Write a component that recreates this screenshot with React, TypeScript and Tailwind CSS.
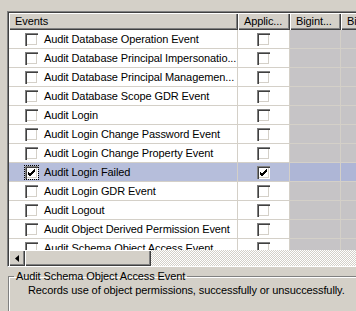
import React from 'react';

const rows = [
  'Audit Database Operation Event',
  'Audit Database Principal Impersonatio...',
  'Audit Database Principal Managemen...',
  'Audit Database Scope GDR Event',
  'Audit Login',
  'Audit Login Change Password Event',
  'Audit Login Change Property Event',
  'Audit Login Failed',
  'Audit Login GDR Event',
  'Audit Logout',
  'Audit Object Derived Permission Event',
  'Audit Schema Object Access Event',
];

const raised =
  'shadow-[inset_1px_1px_0_#ffffff,inset_-1px_-1px_0_#404040,inset_-2px_-2px_0_#808080]';

const CheckBox = ({checked}: {checked?: boolean}) => (
  <div className="w-[13px] h-[13px] bg-white shrink-0 flex items-center justify-center shadow-[inset_1px_1px_0_#808080,inset_2px_2px_0_#404040,inset_-1px_-1px_0_#ffffff,inset_-2px_-2px_0_#d4d0c8]">
    {checked && (
      <svg width="9" height="9" viewBox="0 0 9 9">
        <path d="M1 4 L3 6 L8 1 M1 5 L3 7 L8 2 M1 6 L3 8 L8 3" stroke="#000" strokeWidth="1" fill="none" />
      </svg>
    )}
  </div>
);

const HeaderCell = ({label, w}: {label: string; w: string}) => (
  <div className={`${w} h-[17px] shrink-0 bg-[#d4d0c8] ${raised} pl-[6px] flex items-center`}>
    <span className="leading-none whitespace-nowrap">{label}</span>
  </div>
);

export default function App() {
  return (
    <div
      className="w-[356px] h-[311px] bg-[#d4d0c8] overflow-hidden text-[11px] tracking-[-0.1px] text-black flex flex-col"
      style={{fontFamily: '"Liberation Sans", Arial, sans-serif'}}
    >
      {/* grid */}
      <div className="mt-[11px] ml-[7px] h-[256px] border-t border-l border-[#808080] border-b border-b-white flex">
        <div className="flex-1 border-t border-l border-[#404040] flex flex-col overflow-hidden">
          <div className="flex w-[420px]">
            <HeaderCell label="Events" w="w-[229px]" />
            <HeaderCell label="Applic..." w="w-[52px]" />
            <HeaderCell label="Bigint..." w="w-[51px]" />
            <HeaderCell label="Bi" w="w-[88px]" />
          </div>
          <div className="flex-1 overflow-hidden flex flex-col">
            {rows.map((r, i) => {
              const sel = i === 7;
              return (
                <div key={r} className="flex w-[420px] h-[19px] shrink-0">
                  <div
                    className={`w-[229px] shrink-0 flex items-center pl-[16px] border-r border-b border-[#d4d0c8] ${
                      sel ? 'bg-[#b6bedb]' : 'bg-white'
                    }`}
                  >
                    <div className={sel ? 'outline-1 outline-dotted outline-black' : ''}>
                      <CheckBox checked={sel} />
                    </div>
                    <span className="ml-[6px] whitespace-nowrap">{r}</span>
                  </div>
                  <div
                    className={`w-[52px] shrink-0 flex items-center justify-center border-r border-b border-[#d4d0c8] ${
                      sel ? 'bg-[#b6bedb]' : 'bg-white'
                    }`}
                  >
                    <CheckBox checked={sel} />
                  </div>
                  <div
                    className={`w-[51px] shrink-0 border-r border-b border-[#d4d0c8] ${
                      sel ? 'bg-[#aeb6d6]' : 'bg-[#c6c4c6]'
                    }`}
                  />
                  <div
                    className={`w-[88px] shrink-0 border-r border-b border-[#d4d0c8] ${
                      sel ? 'bg-[#aeb6d6]' : 'bg-[#c6c4c6]'
                    }`}
                  />
                </div>
              );
            })}
          </div>
          {/* horizontal scrollbar */}
          <div className="h-[16px] shrink-0 flex bg-[repeating-conic-gradient(#ffffff_0_25%,#d4d0c8_0_50%)] bg-[length:2px_2px]">
            <div className={`w-[16px] h-[16px] bg-[#d4d0c8] ${raised} flex items-center justify-center`}>
              <svg width="4" height="7" viewBox="0 0 4 7">
                <path d="M4 0 L0 3.5 L4 7 Z" fill="#000" />
              </svg>
            </div>
            <div className={`w-[126px] h-[16px] bg-[#d4d0c8] ${raised}`} />
          </div>
        </div>
      </div>

      {/* description group */}
      <fieldset className="mt-[1px] ml-[8px] flex-1 border-t border-l border-[#808080] shadow-[inset_1px_1px_0_#ffffff] pl-[19px]">
        <legend className="ml-[-14px] px-[2px] leading-[16px]">Audit Schema Object Access Event</legend>
        <p className="leading-[13px] whitespace-nowrap">Records use of object permissions, successfully or unsuccessfully.</p>
      </fieldset>
    </div>
  );
}
